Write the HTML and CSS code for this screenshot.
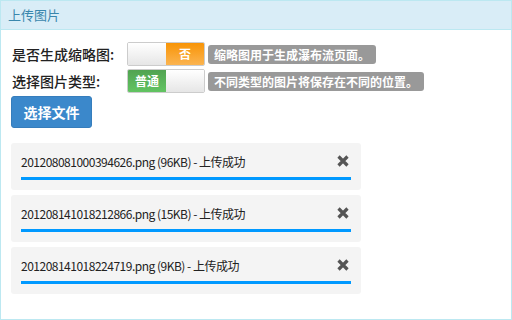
FILE: index.html
```html
<!DOCTYPE html>
<html>
<head>
    <title>上传图片</title>
    <link rel="stylesheet" href="styles.css">
</head>
<body>
    <div class="panel">
        <div class="panel-heading">上传图片</div>
        <div class="panel-body">
            <div class="form-row">
                <label class="row-label">是否生成缩略图:</label>
                <div class="switch">
                    <span class="switch-half"></span>
                    <span class="switch-half switch-warning">否</span>
                </div>
                <span class="tip">缩略图用于生成瀑布流页面。</span>
            </div>

            <div class="form-row">
                <label class="row-label">选择图片类型:</label>
                <div class="switch">
                    <span class="switch-half switch-success">普通</span>
                    <span class="switch-half"></span>
                </div>
                <span class="tip">不同类型的图片将保存在不同的位置。</span>
            </div>

            <button class="btn-primary">选择文件</button>

            <ul class="file-list">
                <li class="file-item">
                    <div class="file-head">
                        <span class="file-name">201208081000394626.png (96KB) - 上传成功</span>
                        <svg class="remove" width="12" height="12" viewBox="0 0 12 12"><path d="M1.5 1.5L10.5 10.5M10.5 1.5L1.5 10.5"/></svg>
                    </div>
                    <div class="progress"><div class="bar" style="width: 100%"></div></div>
                </li>
                <li class="file-item">
                    <div class="file-head">
                        <span class="file-name">201208141018212866.png (15KB) - 上传成功</span>
                        <svg class="remove" width="12" height="12" viewBox="0 0 12 12"><path d="M1.5 1.5L10.5 10.5M10.5 1.5L1.5 10.5"/></svg>
                    </div>
                    <div class="progress"><div class="bar" style="width: 100%"></div></div>
                </li>
                <li class="file-item">
                    <div class="file-head">
                        <span class="file-name">201208141018224719.png (9KB) - 上传成功</span>
                        <svg class="remove" width="12" height="12" viewBox="0 0 12 12"><path d="M1.5 1.5L10.5 10.5M10.5 1.5L1.5 10.5"/></svg>
                    </div>
                    <div class="progress"><div class="bar" style="width: 100%"></div></div>
                </li>
            </ul>
        </div>
    </div>
</body>
</html>
```

FILE: styles.css
```css
body {
    margin: 0;
    font-family: "Noto Sans CJK SC", sans-serif;
    color: #333;
}
.panel {
    width: 512px;
    height: 320px;
    box-sizing: border-box;
    border: 1px solid #bce8f1;
    background: #fff;
}
.panel-heading {
    height: 28px;
    line-height: 28px;
    padding: 0 7px;
    background-color: #d9edf7;
    border-bottom: 1px solid #bce8f1;
    color: #3a87ad;
    font-size: 13px;
}
.panel-body {
    padding: 12px 10px 0;
}
.form-row {
    display: flex;
    align-items: center;
    height: 24px;
    margin-bottom: 3px;
}
.row-label {
    width: 115px;
    padding-left: 1px;
    font-size: 14px;
    font-weight: 500;
    line-height: 24px;
    color: #222;
}
.switch {
    display: flex;
    width: 78px;
    height: 24px;
    box-sizing: border-box;
    border: 1px solid #ccc;
    border-radius: 2px;
    overflow: hidden;
}
.switch-half {
    flex: 1;
    background: linear-gradient(#fff, #e6e6e6);
    color: #fff;
    font-size: 12px;
    font-weight: bold;
    text-align: center;
    line-height: 22px;
}
.switch-warning {
    background: linear-gradient(#f89406, #fbb450);
}
.switch-success {
    background: linear-gradient(#51a351, #62c462);
}
.tip {
    margin-left: 3px;
    padding: 0 6px;
    height: 19px;
    line-height: 19px;
    background-color: #999;
    border-radius: 3px;
    color: #fff;
    font-size: 12px;
    font-weight: bold;
}
.btn-primary {
    display: block;
    width: 81px;
    height: 32px;
    margin-top: 1px;
    padding: 0;
    background-color: #3b88cb;
    border: 1px solid #367dbc;
    border-radius: 3px;
    color: #fff;
    font-family: "Noto Sans CJK SC", sans-serif;
    font-size: 14px;
    font-weight: bold;
    cursor: pointer;
}
.file-list {
    list-style: none;
    margin: 15px 0 0;
    padding: 0;
    width: 350px;
}
.file-item {
    padding: 9px 10px 10px;
    margin-bottom: 5px;
    background-color: #f4f4f4;
    border-radius: 3px;
}
.file-head {
    display: flex;
    align-items: center;
    justify-content: space-between;
    height: 18px;
}
.file-name {
    font-size: 12px;
    letter-spacing: -0.5px;
    color: #222;
}
.remove {
    margin-right: 2px;
    stroke: #555;
    stroke-width: 3.2;
    fill: none;
}
.progress {
    margin-top: 7px;
    height: 3px;
    background-color: #e0e0e0;
}
.bar {
    height: 100%;
    background-color: #09f;
}
```
